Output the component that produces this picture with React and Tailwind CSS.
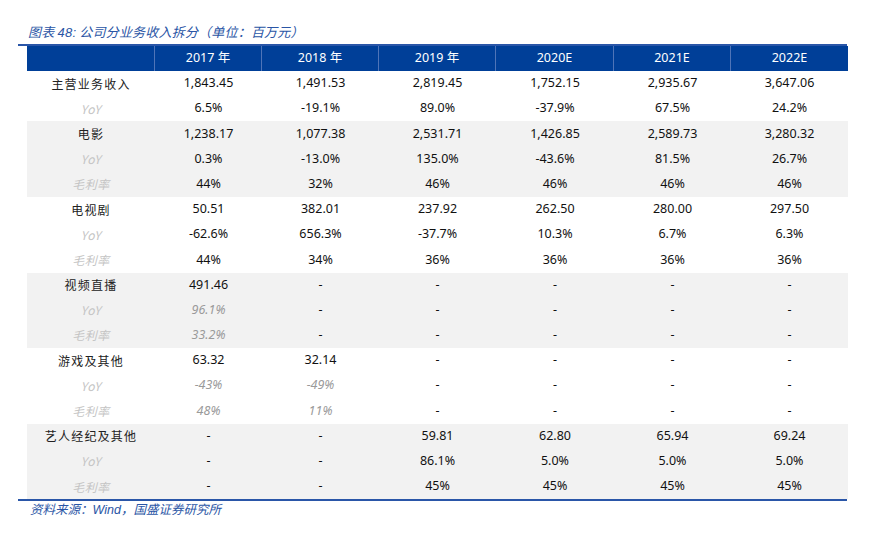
import React from "react";

const cols = ["2017 年", "2018 年", "2019 年", "2020E", "2021E", "2022E"];

const groups = [
  {
    bg: "bg-white",
    rows: [
      { label: "主营业务收入", main: true, vals: ["1,843.45", "1,491.53", "2,819.45", "1,752.15", "2,935.67", "3,647.06"] },
      { label: "YoY", vals: ["6.5%", "-19.1%", "89.0%", "-37.9%", "67.5%", "24.2%"] },
    ],
  },
  {
    bg: "bg-[#f2f2f2]",
    rows: [
      { label: "电影", main: true, vals: ["1,238.17", "1,077.38", "2,531.71", "1,426.85", "2,589.73", "3,280.32"] },
      { label: "YoY", vals: ["0.3%", "-13.0%", "135.0%", "-43.6%", "81.5%", "26.7%"] },
      { label: "毛利率", vals: ["44%", "32%", "46%", "46%", "46%", "46%"] },
    ],
  },
  {
    bg: "bg-white",
    rows: [
      { label: "电视剧", main: true, vals: ["50.51", "382.01", "237.92", "262.50", "280.00", "297.50"] },
      { label: "YoY", vals: ["-62.6%", "656.3%", "-37.7%", "10.3%", "6.7%", "6.3%"] },
      { label: "毛利率", vals: ["44%", "34%", "36%", "36%", "36%", "36%"] },
    ],
  },
  {
    bg: "bg-[#f2f2f2]",
    rows: [
      { label: "视频直播", main: true, vals: ["491.46", "-", "-", "-", "-", "-"] },
      { label: "YoY", vals: ["96.1%", "-", "-", "-", "-", "-"], it: [0] },
      { label: "毛利率", vals: ["33.2%", "-", "-", "-", "-", "-"], it: [0] },
    ],
  },
  {
    bg: "bg-white",
    rows: [
      { label: "游戏及其他", main: true, vals: ["63.32", "32.14", "-", "-", "-", "-"] },
      { label: "YoY", vals: ["-43%", "-49%", "-", "-", "-", "-"], it: [0, 1] },
      { label: "毛利率", vals: ["48%", "11%", "-", "-", "-", "-"], it: [0, 1] },
    ],
  },
  {
    bg: "bg-[#f2f2f2]",
    rows: [
      { label: "艺人经纪及其他", main: true, vals: ["-", "-", "59.81", "62.80", "65.94", "69.24"] },
      { label: "YoY", vals: ["-", "-", "86.1%", "5.0%", "5.0%", "5.0%"] },
      { label: "毛利率", vals: ["-", "-", "45%", "45%", "45%", "45%"] },
    ],
  },
];

const gridCols = "grid grid-cols-[128px_107px_117px_117px_118px_117px_117px]";
const latin = "font-['Noto_Sans','Noto_Sans_CJK_SC',sans-serif]";
const cjk = "font-['Noto_Sans_CJK_SC',sans-serif]";

export default function App() {
  return (
    <div className="w-[875px] h-[533px] bg-white overflow-hidden">
      <div className="ml-[18px] w-[829px] pt-[22px]">
        <div className={`pl-[10px] h-[20px] leading-[20px] text-[13px] italic text-[#2a55a5] ${cjk} tracking-[0.2px]`}>
          图表 <span className="font-['Liberation_Sans',sans-serif]">48:</span> 公司分业务收入拆分（单位：百万元）
        </div>
        <div className="mt-[2px] h-[2px] bg-[#2a56a8]" />
        <div className="ml-[9px] w-[821px]">
          <div className={`${gridCols} h-[25px] bg-[#003f98] text-white text-[12.5px] ${latin}`}>
            <div className="border-r border-[#4f74b8]" />
            {cols.map((c, i) => (
              <div
                key={c}
                className={`flex items-center justify-center ${i < 5 ? "border-r border-[#4f74b8]" : ""}`}
              >
                {c}
              </div>
            ))}
          </div>
          {groups.map((g, gi) => (
            <div key={gi} className={g.bg}>
              {g.rows.map((r, ri) => (
                <div key={ri} className={`${gridCols} h-[25.2px] text-[12.5px]`}>
                  <div
                    className={`flex items-center justify-center ${cjk} ${
                      r.main ? "text-[#222] text-[12px] tracking-[1.2px]" : "italic text-[#c4c4c4] text-[12px] tracking-[0.5px]"
                    }`}
                  >
                    {r.label}
                  </div>
                  {r.vals.map((v, vi) => {
                    const it = r.it && r.it.includes(vi);
                    return (
                      <div
                        key={vi}
                        className={`flex items-center justify-center ${latin} ${
                          it ? "italic text-[#9a9a9a]" : "text-[#111]"
                        }`}
                      >
                        {v}
                      </div>
                    );
                  })}
                </div>
              ))}
            </div>
          ))}
        </div>
        <div className="h-[2px] bg-[#2a56a8]" />
        <div className={`pl-[12px] h-[16px] leading-[16px] text-[12.5px] italic text-[#2a55a5] ${cjk}`}>
          资料来源：<span className="font-['Liberation_Sans',sans-serif]">Wind</span>，国盛证券研究所
        </div>
      </div>
    </div>
  );
}
